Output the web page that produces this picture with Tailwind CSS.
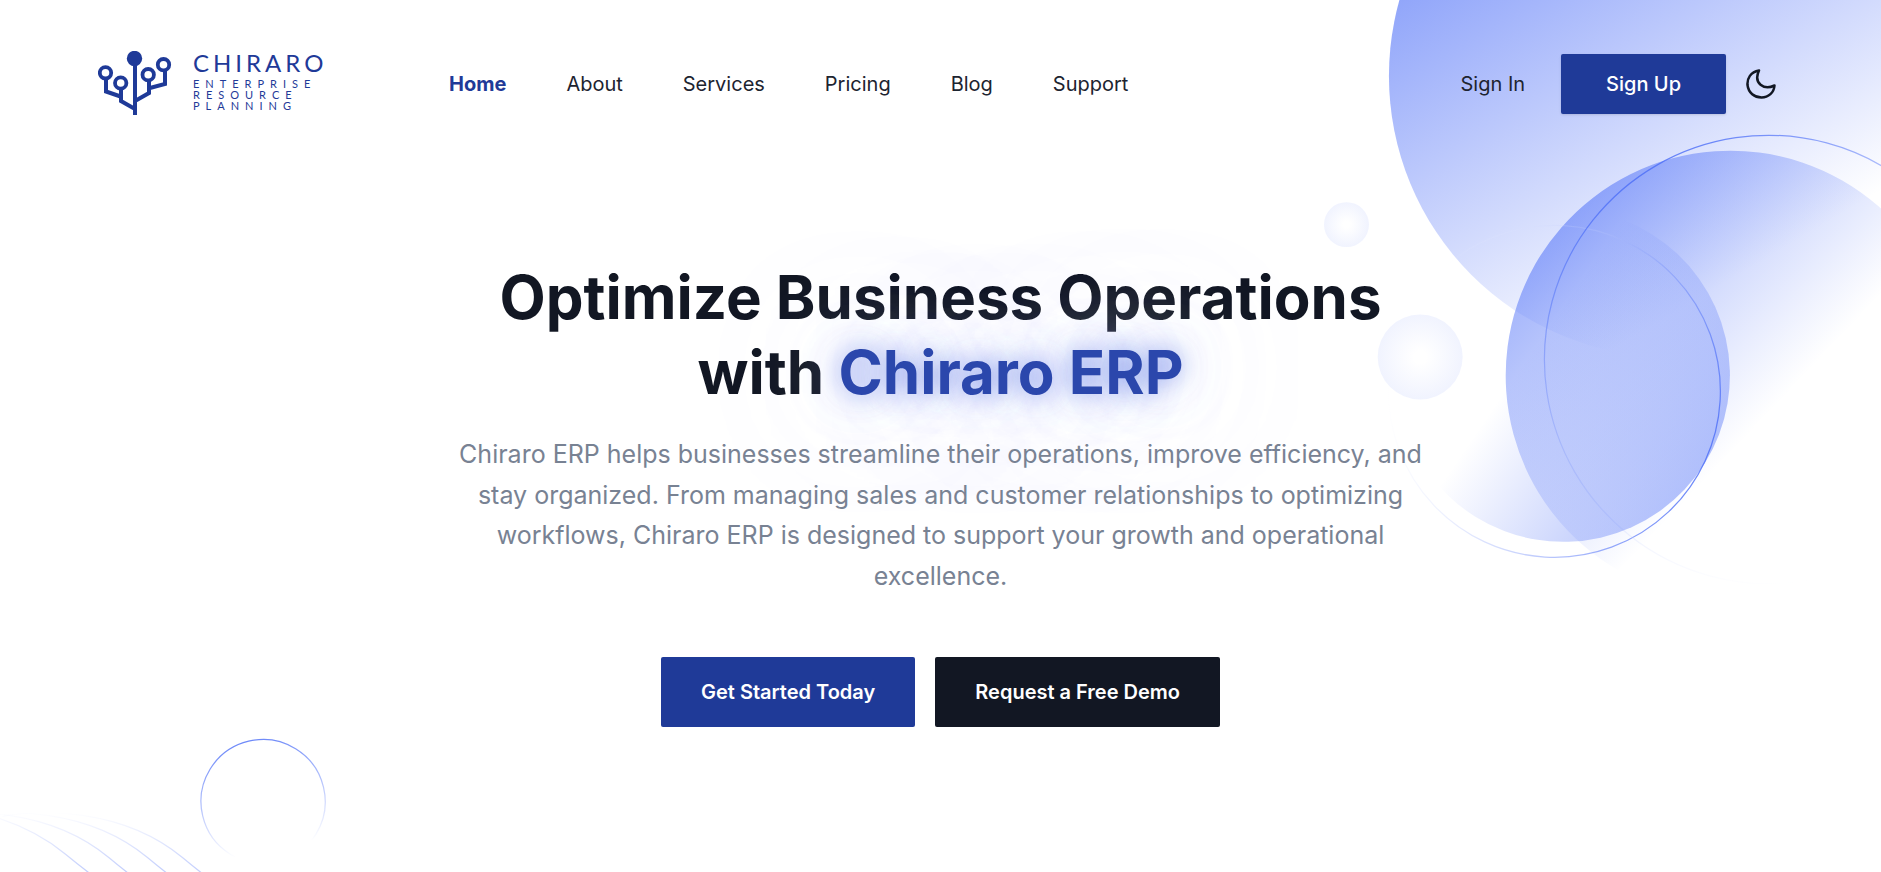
<!DOCTYPE html>
<html lang="en">
<head>
<meta charset="utf-8">
<meta name="viewport" content="width=device-width, initial-scale=1">
<title>Chiraro ERP</title>
<script src="https://cdn.jsdelivr.net/npm/@tailwindcss/browser@4"></script>
</head>
<body class="relative isolate min-h-screen bg-white font-['Inter',sans-serif] text-xl text-[#1d2430]">

<div class="absolute inset-0 -z-10 overflow-hidden" aria-hidden="true">
<svg class="absolute -top-[3px] -right-[5px] h-[695px] w-[562px]" viewBox="0 0 450 556" fill="none">
  <circle cx="277" cy="63" r="225" fill="url(#p0)"/>
  <circle cx="18" cy="182" r="18" fill="url(#p1)"/>
  <circle cx="77" cy="288" r="34" fill="url(#p2)"/>
  <circle cx="325.486" cy="302.87" r="180" transform="rotate(-37.6852 325.486 302.87)" fill="url(#p3)"/>
  <circle opacity="0.8" cx="184.521" cy="315.521" r="132.862" transform="rotate(114.874 184.521 315.521)" stroke="url(#p4)"/>
  <circle opacity="0.8" cx="356" cy="290" r="179.5" transform="rotate(-30 356 290)" stroke="url(#p5)"/>
  <circle opacity="0.8" cx="191.659" cy="302.659" r="133.362" transform="rotate(133.319 191.659 302.659)" fill="url(#p6)"/>
  <defs>
    <linearGradient id="p0" x1="-54.5" y1="-178" x2="222" y2="288" gradientUnits="userSpaceOnUse"><stop stop-color="#4A6CF7"/><stop offset="1" stop-color="#4A6CF7" stop-opacity="0"/></linearGradient>
    <radialGradient id="p1" cx="0" cy="0" r="1" gradientUnits="userSpaceOnUse" gradientTransform="translate(18 182) rotate(90) scale(18)"><stop offset="0.145833" stop-color="#4A6CF7" stop-opacity="0"/><stop offset="1" stop-color="#4A6CF7" stop-opacity="0.08"/></radialGradient>
    <radialGradient id="p2" cx="0" cy="0" r="1" gradientUnits="userSpaceOnUse" gradientTransform="translate(77 288) rotate(90) scale(34)"><stop offset="0.145833" stop-color="#4A6CF7" stop-opacity="0"/><stop offset="1" stop-color="#4A6CF7" stop-opacity="0.08"/></radialGradient>
    <linearGradient id="p3" x1="226.775" y1="-66.1548" x2="292.157" y2="351.421" gradientUnits="userSpaceOnUse"><stop stop-color="#4A6CF7"/><stop offset="1" stop-color="#4A6CF7" stop-opacity="0"/></linearGradient>
    <linearGradient id="p4" x1="184.521" y1="182.159" x2="184.521" y2="448.882" gradientUnits="userSpaceOnUse"><stop stop-color="#4A6CF7"/><stop offset="1" stop-color="white" stop-opacity="0"/></linearGradient>
    <linearGradient id="p5" x1="356" y1="110" x2="356" y2="470" gradientUnits="userSpaceOnUse"><stop stop-color="#4A6CF7"/><stop offset="1" stop-color="white" stop-opacity="0"/></linearGradient>
    <linearGradient id="p6" x1="118.524" y1="29.2497" x2="166.965" y2="338.63" gradientUnits="userSpaceOnUse"><stop stop-color="#4A6CF7"/><stop offset="1" stop-color="#4A6CF7" stop-opacity="0"/></linearGradient>
  </defs>
</svg>

<svg class="absolute -bottom-[105px] -left-[5px] h-[251px] w-[455px]" viewBox="0 0 364 201" fill="none">
  <path d="M5.88928 72.3303C33.6599 66.4798 101.397 64.9086 150.178 105.427C211.155 156.076 229.59 162.093 264.333 166.607C299.076 171.12 337.718 183.657 362.889 212.24" stroke="url(#q0)"/>
  <path d="M-22.1107 72.3303C5.65989 66.4798 73.3965 64.9086 122.178 105.427C183.155 156.076 201.59 162.093 236.333 166.607C271.076 171.12 309.718 183.657 334.889 212.24" stroke="url(#q0)"/>
  <path d="M-53.1107 72.3303C-25.3401 66.4798 42.3965 64.9086 91.1783 105.427C152.155 156.076 170.59 162.093 205.333 166.607C240.076 171.12 278.718 183.657 303.889 212.24" stroke="url(#q0)"/>
  <path d="M-98.1618 65.0889C-68.1416 60.0601 4.73364 60.4882 56.0734 102.431C120.248 154.86 139.905 161.419 177.137 166.956C214.37 172.493 255.575 186.165 281.856 215.481" stroke="url(#q0)"/>
  <circle opacity="0.8" cx="214.505" cy="60.5054" r="49.7205" transform="rotate(-13.421 214.505 60.5054)" stroke="url(#q4)"/>
  <defs>
    <linearGradient id="q0" x1="184.389" y1="69.2405" x2="184.389" y2="212.24" gradientUnits="userSpaceOnUse"><stop stop-color="#4A6CF7" stop-opacity="0"/><stop offset="1" stop-color="#4A6CF7"/></linearGradient>
    <linearGradient id="q4" x1="214.505" y1="10.2849" x2="212.684" y2="99.5816" gradientUnits="userSpaceOnUse"><stop stop-color="#4A6CF7"/><stop offset="1" stop-color="#4A6CF7" stop-opacity="0"/></linearGradient>
  </defs>
</svg>
</div>

<header class="flex items-center pt-[51px] pr-[100px] pl-[98px]">
  <a href="#" class="flex w-[351px] items-start gap-[21px] text-[#1f3a98]" aria-label="Chiraro Enterprise Resource Planning">
    <svg class="h-[66px] w-[74px]" viewBox="0 0 74 66" fill="none" stroke="currentColor" stroke-width="4" aria-hidden="true">
      <circle cx="36.500" cy="7.500" r="7.700" fill="currentColor" stroke="none"/>
      <path d="M37 9V64M8 29V40.500L24 46M23 38V50L37 58M67 20V33L50 37.500M51 29V42L37 50"/>
      <g stroke-width="3.800"><circle cx="7.500" cy="21.800" r="5.700"/><circle cx="22.700" cy="32" r="5.700"/><circle cx="50.200" cy="23.700" r="5.700"/><circle cx="65.500" cy="13.700" r="5.700"/></g>
    </svg>
    <span class="flex flex-col gap-1 font-['Lato',sans-serif]">
      <span class="text-2xl leading-[23px] tracking-[4px]">CHIRARO</span>
      <span class="text-[11px] leading-[11px] tracking-[6px]">ENTERPRISE<br>RESOURCE<br>PLANNING</span>
    </span>
  </a>
  <nav class="flex flex-1 gap-[60px]">
    <a href="#" class="font-bold text-[#1f3a98]">Home</a>
    <a href="#">About</a>
    <a href="#">Services</a>
    <a href="#">Pricing</a>
    <a href="#">Blog</a>
    <a href="#">Support</a>
  </nav>
  <div class="flex items-center">
    <a href="#" class="mr-9">Sign In</a>
    <a href="#" class="rounded-xs bg-[#1f3a98] px-[45px] py-4 font-medium text-white shadow-sm">Sign Up</a>
    <button type="button" aria-label="Toggle dark mode" class="ml-[15px] flex size-10 items-center justify-center text-[#121723]">
      <svg class="size-[30px]" viewBox="0 0 30 30" fill="none" stroke="currentColor" stroke-width="2.500" stroke-linejoin="round" aria-hidden="true"><path d="M13 1.500C4.500 3 1 9.500 1.500 16C2.500 24 8.500 28.500 15.500 28.500C22.500 28.500 28 23.500 28.500 16.500C18 21.500 7 14.500 13 1.500Z"/></svg>
    </button>
  </div>
</header>

<main class="mx-auto flex max-w-[1000px] flex-col items-center pt-[143px] text-center">
  <h1 class="mb-6 text-[60px] leading-[75px] font-bold text-[#121723]">Optimize Business Operations<br>with <span class="text-[#2b47ac] [text-shadow:0_0_25px_#3f5fe099,0_0_60px_#a9b8fa50,0_0_100px_#dfe4ff,0_0_120px_#e8ecff80]">Chiraro ERP</span></h1>
  <p class="mb-[60px] text-[25px] leading-relaxed text-[#788293]">Chiraro ERP helps businesses streamline their operations, improve efficiency, and stay organized. From managing sales and customer relationships to optimizing workflows, Chiraro ERP is designed to support your growth and operational excellence.</p>
  <div class="flex gap-5 font-semibold text-white">
    <a href="#" class="rounded-xs bg-[#1f3a98] px-10 py-[21px]">Get Started Today</a>
    <a href="#" class="rounded-xs bg-[#121723] px-10 py-[21px]">Request a Free Demo</a>
  </div>
</main>
</body>
</html>
